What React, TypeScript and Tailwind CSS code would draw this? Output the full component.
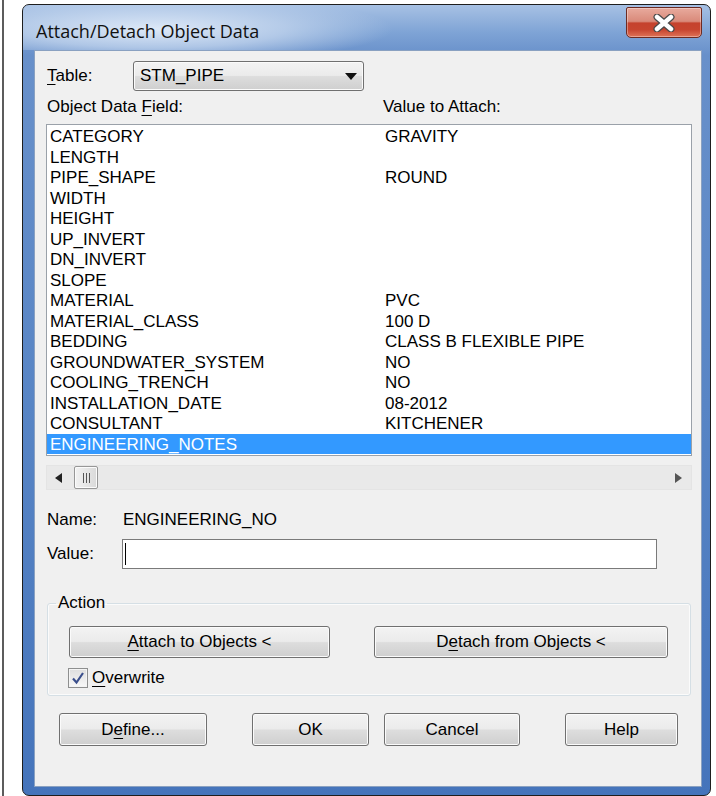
import React from "react";

// field / value pairs shown in the object data list
const rows: [string, string][] = [
  ["CATEGORY", "GRAVITY"],
  ["LENGTH", ""],
  ["PIPE_SHAPE", "ROUND"],
  ["WIDTH", ""],
  ["HEIGHT", ""],
  ["UP_INVERT", ""],
  ["DN_INVERT", ""],
  ["SLOPE", ""],
  ["MATERIAL", "PVC"],
  ["MATERIAL_CLASS", "100 D"],
  ["BEDDING", "CLASS B FLEXIBLE PIPE"],
  ["GROUNDWATER_SYSTEM", "NO"],
  ["COOLING_TRENCH", "NO"],
  ["INSTALLATION_DATE", "08-2012"],
  ["CONSULTANT", "KITCHENER"],
  ["ENGINEERING_NOTES", ""],
];

const btn =
  "flex items-center justify-center rounded-[3px] border border-[#707070] bg-[linear-gradient(to_bottom,#f3f3f3_0%,#ebebeb_48%,#dddddd_52%,#cfcfcf_100%)] shadow-[inset_0_0_0_1px_#fbfbfb] text-[17px] text-black";

function WinButton({ children, className }: { children: React.ReactNode; className: string }) {
  return <div className={`${btn} ${className}`}>{children}</div>;
}

export default function App() {
  return (
    <div className="h-[796px] w-full overflow-hidden bg-white pl-[2px] font-['Liberation_Sans',Arial,sans-serif] text-black">
      <div className="h-full border-l-2 border-[#5c5c5c] pl-[18px] pt-[4px]">
        {/* window frame */}
        <div className="relative h-[792px] w-[689px] rounded-[7px] border border-[#1e1e1e] bg-[linear-gradient(to_bottom,#a7c1e4_0px,#7ea3d5_28px,#6890ca_50px,#5885c5_400px,#4574bb_100%)]">
          {/* title bar */}
          <div className="relative h-[45px] rounded-t-[6px] bg-[radial-gradient(ellipse_240px_34px_at_130px_24px,rgba(226,236,249,0.95)_0%,rgba(196,214,238,0.75)_55%,rgba(160,188,226,0)_100%)] pl-[13px] pt-[14px]">
            <div className="font-['Open_Sans',sans-serif] text-[18px] leading-[24px] text-[#111]">
              Attach/Detach Object Data
            </div>
            {/* close button */}
            <div className="absolute right-[8px] top-[2px] flex h-[31px] w-[76px] items-center justify-center rounded-b-[5px] rounded-t-[2px] border border-[#6d2b22] bg-[linear-gradient(to_bottom,#e8aa9d_0%,#d98a7a_46%,#c5422d_52%,#c7452f_75%,#df7358_100%)] shadow-[inset_0_0_0_1px_rgba(255,255,255,0.35)]">
              <svg width="26" height="18" viewBox="0 0 26 18">
                <path d="M6 3 L20 15 M20 3 L6 15" stroke="#4a4a4a" strokeWidth="7" strokeLinecap="round" fill="none" />
                <path d="M6 3 L20 15 M20 3 L6 15" stroke="#ffffff" strokeWidth="4.5" strokeLinecap="round" fill="none" />
              </svg>
            </div>
          </div>

          {/* client area */}
          <div className="ml-[11px] h-[737px] w-[668px] border border-[#8aa1c1] bg-[#f0f0f0] pl-[11px] pt-[10px] text-[17px]">
            {/* table selector */}
            <div className="flex h-[30px] items-center">
              <div className="w-[87px] pl-[1px]">
                <span className="underline underline-offset-[3px]">T</span>able:
              </div>
              <div className="flex h-[30px] w-[231px] items-center justify-between rounded-[3px] border border-[#707070] bg-[linear-gradient(to_bottom,#f3f3f3_0%,#ebebeb_48%,#dddddd_52%,#cfcfcf_100%)] pl-[6px] pr-[6px] shadow-[inset_0_0_0_1px_#fbfbfb]">
                <span>STM_PIPE</span>
                <svg width="12" height="7" viewBox="0 0 12 7">
                  <path d="M0 0 H12 L6 7 Z" fill="#111" />
                </svg>
              </div>
            </div>

            {/* column headers */}
            <div className="mt-[6px] flex h-[20px] leading-[20px]">
              <div className="w-[337px] pl-[1px]">
                Object Data <span className="underline underline-offset-[3px]">F</span>ield:
              </div>
              <div>Value to Attach:</div>
            </div>

            {/* list */}
            <div className="mt-[7px] w-[646px] border border-[#9aa1a9] bg-white py-[1px]">
              {rows.map(([field, value], i) => {
                const selected = i === rows.length - 1;
                return (
                  <div
                    key={field}
                    className={`flex h-[20.5px] pl-[3px] leading-[21.5px] ${selected ? "bg-[#3399ff] text-white" : ""}`}
                  >
                    <div className="w-[335px]">{field}</div>
                    <div>{value}</div>
                  </div>
                );
              })}
            </div>

            {/* horizontal scrollbar */}
            <div className="mt-[9px] flex h-[25px] w-[646px] items-center border border-[#e4e4e4] bg-[#e9e9e9] pl-[8px] pr-[9px]">
              <svg width="7" height="10" viewBox="0 0 7 10">
                <path d="M7 0 V10 L0 5 Z" fill="#222" />
              </svg>
              <div className="ml-[12px] flex h-[23px] w-[24px] items-center justify-center gap-[2px] rounded-[2px] border border-[#979797] bg-[linear-gradient(to_right,#f2f2f2_0%,#e6e6e6_50%,#d9d9d9_100%)] shadow-[inset_0_0_0_1px_#fbfbfb]">
                <span className="h-[10px] w-px bg-[#555]" />
                <span className="h-[10px] w-px bg-[#555]" />
                <span className="h-[10px] w-px bg-[#555]" />
              </div>
              <div className="flex-1" />
              <svg width="7" height="10" viewBox="0 0 7 10">
                <path d="M0 0 V10 L7 5 Z" fill="#555" />
              </svg>
            </div>

            {/* name */}
            <div className="mt-[19px] flex h-[20px] leading-[22px]">
              <div className="w-[77px] pl-[1px]">Name:</div>
              <div>ENGINEERING_NO</div>
            </div>

            {/* value */}
            <div className="mt-[10px] flex h-[30px] items-center">
              <div className="w-[76px] pl-[1px]">Value:</div>
              <div className="flex h-[30px] w-[535px] items-center border border-[#7a7a7a] bg-white pl-[2px]">
                <span className="h-[22px] w-px bg-black" />
              </div>
            </div>

            {/* action group */}
            <fieldset className="ml-[1px] mt-[24px] w-[644px] rounded-[3px] border border-[#d5dfe5] pb-[7px] shadow-[inset_0_0_0_1px_#fbfbfb]">
              <legend className="ml-[8px] px-[2px] leading-[20px]">Action</legend>
              <div className="mt-[13px] flex gap-[44px] pl-[21px]">
                <WinButton className="h-[32px] w-[261px]">
                  <span>
                    <span className="underline underline-offset-[3px]">A</span>ttach to Objects &lt;
                  </span>
                </WinButton>
                <WinButton className="h-[32px] w-[294px]">
                  <span>
                    D<span className="underline underline-offset-[3px]">e</span>tach from Objects &lt;
                  </span>
                </WinButton>
              </div>
              <div className="mt-[10px] flex h-[20px] items-center pl-[20px] leading-[20px]">
                <div className="flex h-[20px] w-[20px] items-center justify-center border border-[#8e8f8f] bg-[linear-gradient(to_bottom,#dedede_0%,#f8f8f8_100%)] shadow-[inset_0_0_0_1px_#f4f4f4]">
                  <svg width="14" height="14" viewBox="0 0 14 14">
                    <path d="M2 7.5 L5.5 11.5 L12 2" stroke="#3b4f8c" strokeWidth="2.2" fill="none" />
                  </svg>
                </div>
                <span className="ml-[4px]">
                  <span className="underline underline-offset-[3px]">O</span>verwrite
                </span>
              </div>
            </fieldset>

            {/* dialog buttons */}
            <div className="ml-[13px] mt-[17px] flex">
              <WinButton className="h-[33px] w-[148px]">
                <span>
                  D<span className="underline underline-offset-[3px]">e</span>fine...
                </span>
              </WinButton>
              <WinButton className="ml-[45px] h-[33px] w-[117px]">OK</WinButton>
              <WinButton className="ml-[15px] h-[33px] w-[136px]">Cancel</WinButton>
              <WinButton className="ml-[45px] h-[33px] w-[113px]">Help</WinButton>
            </div>
          </div>
        </div>
      </div>
    </div>
  );
}
